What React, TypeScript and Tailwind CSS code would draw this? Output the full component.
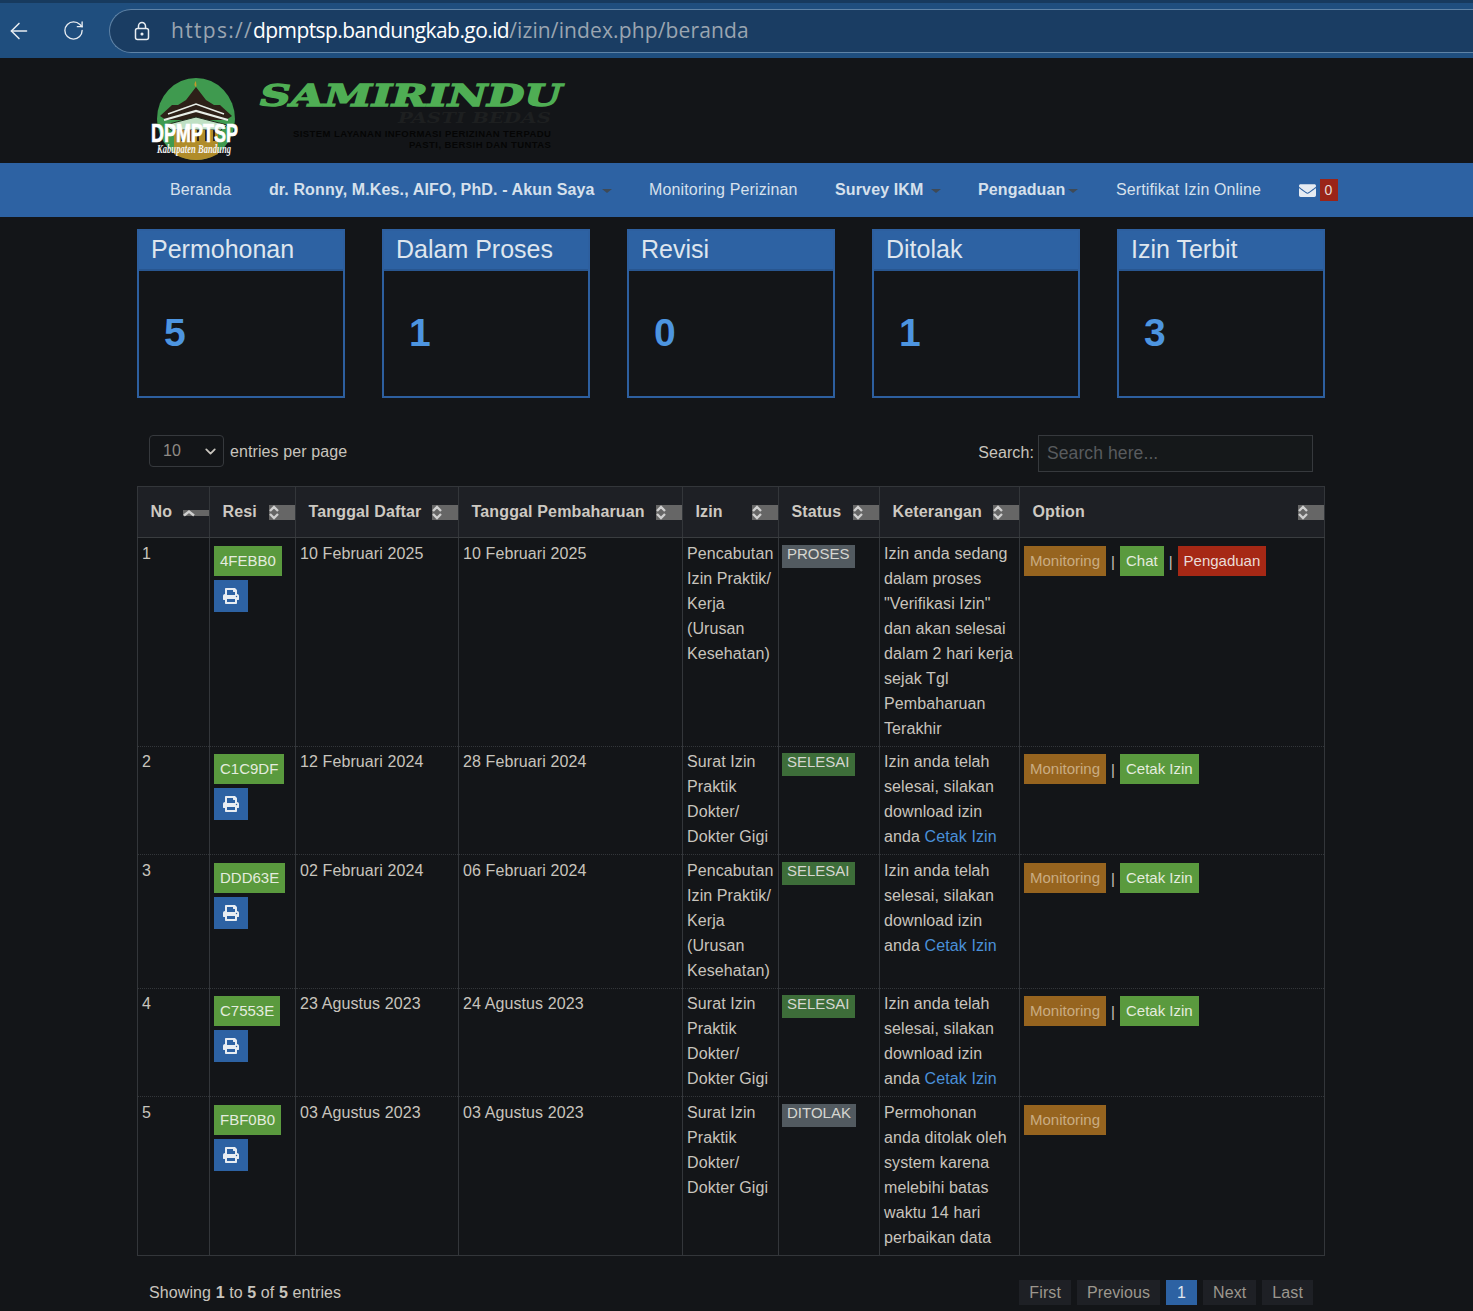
import { ArrowLeft, RotateCw, ChevronDown } from "lucide-react";
import { FaEnvelope, FaPrint } from "react-icons/fa";

const stats = [
  { title: "Permohonan", value: 5 },
  { title: "Dalam Proses", value: 1 },
  { title: "Revisi", value: 0 },
  { title: "Ditolak", value: 1 },
  { title: "Izin Terbit", value: 3 },
];

const columns = [
  { label: "No", width: "w-[72px]", sorted: true },
  { label: "Resi", width: "w-[86px]" },
  { label: "Tanggal Daftar", width: "w-[163px]" },
  { label: "Tanggal Pembaharuan", width: "w-[224px]" },
  { label: "Izin", width: "w-[96px]" },
  { label: "Status", width: "w-[101px]" },
  { label: "Keterangan", width: "w-[140px]" },
  { label: "Option", width: "w-[305px]" },
];

const selesai = "Izin anda telah selesai, silakan download izin anda ";

const rows = [
  {
    no: 1, resi: "4FEBB0", daftar: "10 Februari 2025", baru: "10 Februari 2025",
    izin: "Pencabutan Izin Praktik/ Kerja (Urusan Kesehatan)", status: "PROSES",
    ket: "Izin anda sedang dalam proses \"Verifikasi Izin\" dan akan selesai dalam 2 hari kerja sejak Tgl Pembaharuan Terakhir",
    cetak: false, chat: true, height: "h-[209px]", low: true,
  },
  {
    no: 2, resi: "C1C9DF", daftar: "12 Februari 2024", baru: "28 Februari 2024",
    izin: "Surat Izin Praktik Dokter/ Dokter Gigi", status: "SELESAI", ket: selesai,
    cetak: true, chat: false, height: "h-[108px]", low: false,
  },
  {
    no: 3, resi: "DDD63E", daftar: "02 Februari 2024", baru: "06 Februari 2024",
    izin: "Pencabutan Izin Praktik/ Kerja (Urusan Kesehatan)", status: "SELESAI", ket: selesai,
    cetak: true, chat: false, height: "h-[134px]", low: true,
  },
  {
    no: 4, resi: "C7553E", daftar: "23 Agustus 2023", baru: "24 Agustus 2023",
    izin: "Surat Izin Praktik Dokter/ Dokter Gigi", status: "SELESAI", ket: selesai,
    cetak: true, chat: false, height: "h-[108px]", low: false,
  },
  {
    no: 5, resi: "FBF0B0", daftar: "03 Agustus 2023", baru: "03 Agustus 2023",
    izin: "Surat Izin Praktik Dokter/ Dokter Gigi", status: "DITOLAK",
    ket: "Permohonan anda ditolak oleh system karena melebihi batas waktu 14 hari perbaikan data",
    cetak: false, chat: false, height: "h-[159px]", low: true,
  },
];

const Caret = ({ tight }: { tight?: boolean }) => (
  <span className={`${tight ? "ml-[3px]" : "ml-[7px]"} inline-block h-0 w-0 align-middle border-x-[5px] border-x-transparent border-t-[4px] border-t-[#3f4a56]`} />
);

const Logo = () => (
  <svg width="90" height="86" viewBox="0 0 90 86" className="shrink-0 overflow-visible">
    <ellipse cx="44" cy="43" rx="39" ry="41" fill="#3f9a4f" />
    <g transform="translate(0 2)">
      <path d="M44 3c-2 2-2 5 0 6 1-1 0-3 0-6z" fill="#c49a2c" />
      <path d="M44 9 L54 22 L70 32 L18 32 L34 22 Z" fill="#2d2018" />
      <path d="M20 27 L68 27 L80 38 L74 42 L14 42 L8 38 Z" fill="#2d2018" />
      <path d="M16 36 L44 26 L72 36" fill="none" stroke="#e8eee8" strokeWidth="1.6" />
      <path d="M12 42 L44 33 L76 42" fill="none" stroke="#e8eee8" strokeWidth="2.2" />
      <path d="M13 47 L44 39 L75 47 L69 52 L19 52 Z" fill="#bfe0c4" stroke="#1f2a1e" strokeWidth="1" />
      <path d="M22 52 H66 V76 Q44 88 22 76 Z" fill="#b08c2a" />
      <path d="M30 52v11M38 52v11M46 52v11M54 52v11M62 52v11" stroke="#2d2018" strokeWidth="2" />
    </g>
    <text x="-1" y="66" fill="#ffffff" stroke="#ffffff" strokeWidth="0.7" fontFamily="'Liberation Sans', sans-serif" fontWeight="700" fontSize="25" textLength="87" lengthAdjust="spacingAndGlyphs">DPMPTSP</text>
    <text x="5" y="77" fill="#f4f4f4" fontFamily="'Liberation Serif', serif" fontStyle="italic" fontWeight="700" fontSize="13" textLength="74" lengthAdjust="spacingAndGlyphs">Kabupaten Bandung</text>
  </svg>
);

const Wordmark = () => (
  <svg width="310" height="80" viewBox="0 0 310 80" className="ml-[16px] shrink-0">
    <text x="2" y="30" fill="#4fae54" stroke="#4fae54" strokeWidth="1.4" fontFamily="'DejaVu Serif', serif" fontStyle="italic" fontWeight="700" fontSize="30" textLength="302" lengthAdjust="spacingAndGlyphs">SAMIRINDU</text>
    <text x="140" y="47" fill="#1d1f20" fontFamily="'DejaVu Serif', serif" fontStyle="italic" fontWeight="700" fontSize="15" textLength="153" lengthAdjust="spacingAndGlyphs">PASTI BEDAS</text>
    <text x="35" y="61" fill="#050505" fontFamily="'Liberation Sans', sans-serif" fontWeight="700" fontSize="9.5" textLength="258" lengthAdjust="spacing">SISTEM LAYANAN INFORMASI PERIZINAN TERPADU</text>
    <text x="151" y="72" fill="#050505" fontFamily="'Liberation Sans', sans-serif" fontWeight="700" fontSize="9.5" textLength="142" lengthAdjust="spacing">PASTI, BERSIH DAN TUNTAS</text>
  </svg>
);

const SortIcon = ({ sorted }: { sorted?: boolean }) =>
  sorted ? (
    <span className="absolute right-0 top-[23px] h-[6px] w-[26px] bg-[#666666]">
      <svg width="12" height="8" viewBox="0 0 12 8" fill="none" stroke="#cfcfcf" strokeWidth="2.4" className="absolute left-0 -top-[1px]">
        <path d="M1 6.5 L6 2.5 L11 6.5" />
      </svg>
    </span>
  ) : (
    <span className="absolute right-0 top-[18px] h-[15px] w-[26px] bg-[#666666]">
      <svg width="10" height="15" viewBox="0 0 10 15" fill="none" stroke="#cfcfcf" strokeWidth="2.3">
        <path d="M1 6 L5 2 L9 6M1 9 L5 13 L9 9" />
      </svg>
    </span>
  );

const badgeColor = (status: string) => {
  if (status === "SELESAI") return "bg-[#3d6d39]";
  return "bg-[#525a60]";
};

export default function App() {
  return (
    <div className="min-h-[1311px] overflow-hidden bg-[#131518] font-['Liberation_Sans',Arial,sans-serif] text-[16px] tracking-[0.1px] text-[#c8c4bd]">
      {/* browser bar */}
      <div className="flex h-[58px] items-center border-t-[3px] border-t-[#173a5e] bg-[#1f4e7e] text-[#e8edf2]">
        <ArrowLeft size={26} strokeWidth={1.4} className="ml-[6px]" />
        <RotateCw size={23} strokeWidth={1.4} className="ml-[30px]" />
        <div className="ml-[24px] flex h-[44px] flex-1 items-center rounded-l-full border border-r-0 border-[#5f83a6] bg-[#1a3d63] pl-[23px]">
          <svg width="18" height="20" viewBox="0 0 18 20" fill="none" stroke="#e8edf2" strokeWidth="1.5">
            <rect x="2.5" y="7.5" width="13" height="11" rx="2" />
            <path d="M5.5 7.5V5a3.5 3.5 0 0 1 7 0v2.5" />
            <circle cx="9" cy="13" r="0.8" fill="#e8edf2" />
          </svg>
          <span className="ml-[20px] font-['Open_Sans',sans-serif] text-[21px] tracking-[0.13px] text-[#9aa5b1]">
            <span className="tracking-[1.3px]">https://</span>
            <span className="tracking-[-0.58px] text-white">dpmptsp.bandungkab.go.id</span>
            /izin/index.php/beranda
          </span>
        </div>
      </div>

      {/* header */}
      <div className="flex h-[105px] items-start pl-[152px] pt-[18px]">
        <Logo />
        <Wordmark />
      </div>

      {/* nav */}
      <nav className="flex h-[54px] items-center gap-[37.5px] bg-[#2d62a3] pl-[170px] tracking-[0.13px] text-[#d6e0ec]">
        <span>Beranda</span>
        <span className="font-bold">dr. Ronny, M.Kes., AIFO, PhD. - Akun Saya<Caret /></span>
        <span>Monitoring Perizinan</span>
        <span className="font-bold">Survey IKM<Caret /></span>
        <span className="font-bold">Pengaduan<Caret tight /></span>
        <span>Sertifikat Izin Online</span>
        <span className="flex items-center gap-[4px]">
          <FaEnvelope size={17} className="text-[#e6ebf2]" />
          <span className="flex h-[22px] w-[18px] items-center justify-center bg-[#9a2418] text-[14px] text-[#e6ddd8]">0</span>
        </span>
      </nav>

      <main className="mx-[137px] w-[1188px]">
        {/* stat cards */}
        <div className="mt-[12px] flex justify-between">
          {stats.map((s) => (
            <div key={s.title} className="h-[169px] w-[208px] border-2 border-[#2d5f9f]">
              <div className="flex h-[40px] items-center border-b-2 border-[#285690] bg-[#2d62a3] pl-[12px] text-[25px] tracking-normal text-[#dfe6ee]">
                {s.title}
              </div>
              <div className="pl-[25px] pt-[38px] text-[39px] leading-[48px] font-bold text-[#4d95e0]">{s.value}</div>
            </div>
          ))}
        </div>

        {/* toolbar */}
        <div className="mt-[37px] flex h-[37px] items-start justify-between px-[12px]">
          <div className="flex h-[32px] items-center gap-[6px]">
            <div className="flex h-[32px] w-[75px] items-center justify-between rounded-[4px] border border-[#36393d] pl-[13px] pr-[4px] text-[#8f8b85]">
              <span>10</span>
              <ChevronDown size={17} strokeWidth={2.5} className="text-[#c8c4bd]" />
            </div>
            <span className="pt-[1px]">entries per page</span>
          </div>
          <div className="flex items-center gap-[4px]">
            <span className="-mt-[2px]">Search:</span>
            <div className="flex h-[37px] w-[275px] items-center border border-[#36393d] bg-[#15181a] pl-[8px] text-[17.5px] text-[#585b5e]">Search here...</div>
          </div>
        </div>

        {/* table */}
        <table className="mt-[14px] w-[1188px] table-fixed border-collapse border border-[#33363a]">
          <thead>
            <tr className="h-[51px] bg-[#1e2025]">
              {columns.map((c) => (
                <th key={c.label} className={`${c.width} relative border-x border-b border-x-[#33363a] border-b-[#3a3d40] p-0 pb-[1px] pl-[12.5px] text-left font-bold tracking-[0.15px] text-[#cdc9c2]`}>
                  {c.label}
                  <SortIcon sorted={c.sorted} />
                </th>
              ))}
            </tr>
          </thead>
          <tbody>
            {rows.map((r) => {
              const textCell = `border-x border-x-[#33363a] px-[4px] ${r.low ? "pt-[3px]" : "pt-[2px]"}`;
              const btnCell = `border-x border-x-[#33363a] px-[4px] ${r.low ? "pt-[8px]" : "pt-[7px]"}`;
              return (
                <tr key={r.no} className={`${r.height} border-b border-dotted border-[#33363a] align-top leading-[25px]`}>
                  <td className={textCell}>{r.no}</td>
                  <td className={btnCell}>
                    <div className="flex flex-col items-start gap-[4px]">
                      <span className="flex h-[30px] items-center bg-[#5a9a3e] px-[6px] pb-[2px] text-[15px] tracking-normal text-[#e4ecdf]">{r.resi}</span>
                      <span className="flex h-[32px] w-[34px] items-center justify-center bg-[#2d62a3] text-[#e8edf2]"><FaPrint size={16} /></span>
                    </div>
                  </td>
                  <td className={textCell}>{r.daftar}</td>
                  <td className={textCell}>{r.baru}</td>
                  <td className={textCell}>{r.izin}</td>
                  <td className={`border-x border-x-[#33363a] px-[3px] ${r.low ? "pt-[7px]" : "pt-[6px]"}`}>
                    <span className={`${badgeColor(r.status)} block h-[23px] w-fit px-[5px] text-[15px] leading-[18px] tracking-normal text-[#d6d6d0]`}>{r.status}</span>
                  </td>
                  <td className={textCell}>
                    {r.ket}
                    {r.cetak && <span className="text-[#4a90d9]">Cetak Izin</span>}
                  </td>
                  <td className={btnCell}>
                    <div className="flex items-center gap-[5px] text-[15px] tracking-normal">
                      <span className="flex h-[30px] items-center bg-[#96641f] px-[6px] pb-[2px] text-[#c9ac82]">Monitoring</span>
                      {r.no !== 5 && <span>|</span>}
                      {r.cetak && <span className="flex h-[30px] items-center bg-[#5a9a3e] px-[6px] pb-[2px] text-[#e4ecdf]">Cetak Izin</span>}
                      {r.chat && <span className="flex h-[30px] items-center bg-[#5a9a3e] px-[6px] pb-[2px] text-[#e4ecdf]">Chat</span>}
                      {r.chat && <span>|</span>}
                      {r.chat && <span className="flex h-[30px] items-center bg-[#a62815] px-[6px] pb-[2px] text-[#eadcd8]">Pengaduan</span>}
                    </div>
                  </td>
                </tr>
              );
            })}
          </tbody>
        </table>

        {/* footer */}
        <div className="mt-[24px] flex items-center justify-between px-[12px]">
          <span>Showing <b>1</b> to <b>5</b> of <b>5</b> entries</span>
          <div className="flex items-center gap-[6px] text-[#9c978e]">
            <span className="flex h-[25px] items-center bg-[#1e2025] px-[10px]">First</span>
            <span className="flex h-[25px] items-center bg-[#1e2025] px-[10px]">Previous</span>
            <span className="flex h-[25px] items-center bg-[#2d62a3] px-[11px] text-[#e0e6ee]">1</span>
            <span className="flex h-[25px] items-center bg-[#1e2025] px-[10px]">Next</span>
            <span className="flex h-[25px] items-center bg-[#1e2025] px-[10px]">Last</span>
          </div>
        </div>
      </main>
    </div>
  );
}
